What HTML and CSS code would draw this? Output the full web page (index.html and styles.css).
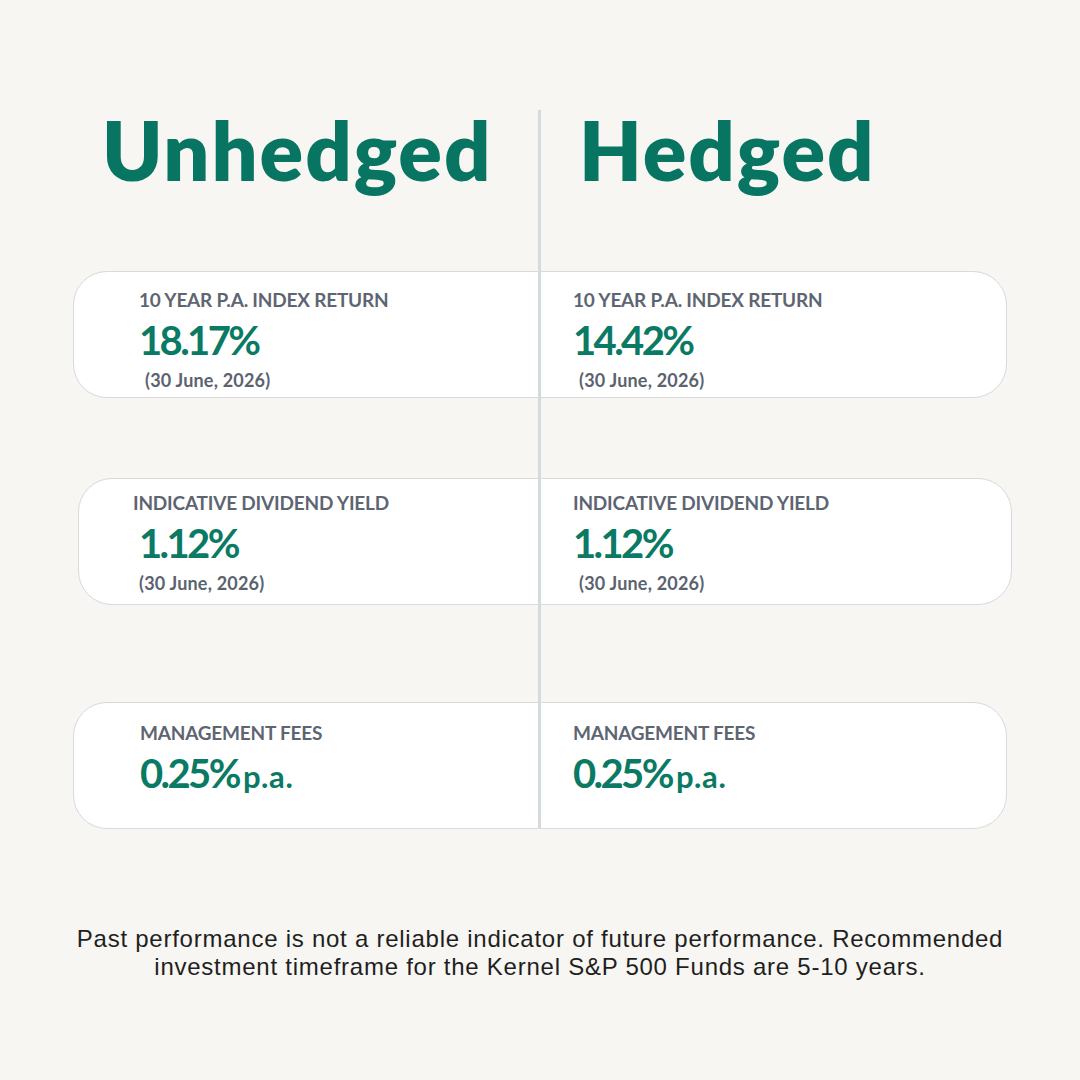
FILE: index.html
```html
<!DOCTYPE html>
<html lang="en">
<head>
<meta charset="utf-8">
<title>Kernel S&amp;P 500 Funds</title>
<link rel="stylesheet" href="styles.css">
</head>
<body>
<main class="page">
  <div class="divider"></div>
  <header class="titles">
    <h1 class="title title-left">Unhedged</h1>
    <h1 class="title title-right">Hedged</h1>
  </header>

  <section class="card card-return">
    <div class="cell cell-left">
      <div class="label">10 YEAR P.A. INDEX RETURN</div>
      <div class="value">18.17%</div>
      <div class="date">(30 June, 2026)</div>
    </div>
    <div class="cell cell-right">
      <div class="label">10 YEAR P.A. INDEX RETURN</div>
      <div class="value">14.42%</div>
      <div class="date">(30 June, 2026)</div>
    </div>
  </section>

  <section class="card card-yield">
    <div class="cell cell-left">
      <div class="label">INDICATIVE DIVIDEND YIELD</div>
      <div class="value">1.12%</div>
      <div class="date">(30 June, 2026)</div>
    </div>
    <div class="cell cell-right">
      <div class="label">INDICATIVE DIVIDEND YIELD</div>
      <div class="value">1.12%</div>
      <div class="date">(30 June, 2026)</div>
    </div>
  </section>

  <section class="card card-fees">
    <div class="cell cell-left">
      <div class="label">MANAGEMENT FEES</div>
      <div class="value">0.25%<span class="unit">p.a.</span></div>
    </div>
    <div class="cell cell-right">
      <div class="label">MANAGEMENT FEES</div>
      <div class="value">0.25%<span class="unit">p.a.</span></div>
    </div>
  </section>

  <p class="note">Past performance is not a reliable indicator of future performance. Recommended<br>investment timeframe for the Kernel S&amp;P 500 Funds are 5-10 years.</p>
</main>
</body>
</html>
```

FILE: styles.css
```css
* { box-sizing: border-box; }

html, body {
  margin: 0;
  padding: 0;
  background: #f7f6f2;
}

.page {
  position: relative;
  width: 1080px;
  height: 1080px;
  padding-top: 109px;
  font-family: "Lato", "Liberation Sans", sans-serif;
  background: #f7f6f2;
}

.divider {
  position: absolute;
  left: 538px;
  top: 110px;
  width: 3px;
  height: 719px;
  background: #d5dadf;
  z-index: 2;
}

.titles {
  display: grid;
  grid-template-columns: 467px 467px;
  margin-left: 73px;
}

.title {
  margin: 0;
  font-size: 81px;
  line-height: 81px;
  font-weight: 800;
  color: #077562;
  letter-spacing: 2px;
}

.title-left { padding-left: 29px; }
.title-right { padding-left: 39px; }

.card {
  display: grid;
  grid-template-columns: 467px 467px;
  width: 934px;
  height: 127px;
  margin-left: 73px;
  background: #ffffff;
  border: 1.5px solid #d6dadd;
  border-radius: 34px;
}

.card-return { margin-top: 81px; }
.card-yield { margin-top: 80px; margin-left: 78px; }
.card-fees { margin-top: 97px; }

.cell { padding-top: 16px; }
.cell-left { padding-left: 65px; }
.cell-right { padding-left: 32px; }

.card-yield .cell { padding-top: 12px; }
.card-yield .cell-left { padding-left: 54px; }
.card-yield .cell-right { padding-left: 27px; }
.card-yield .cell-left .value,
.card-yield .cell-left .date { margin-left: 6px; }

.card-fees .cell { padding-top: 18px; }
.card-fees .cell-left { padding-left: 66px; }

.label {
  font-size: 19px;
  line-height: 24px;
  font-weight: 700;
  color: #5e6572;
  letter-spacing: -0.2px;
  text-shadow: 0 0 18px rgba(255, 255, 255, 0.9);
}

.value {
  margin-top: 7px;
  font-size: 40px;
  line-height: 42px;
  font-weight: 700;
  color: #0a7a64;
  letter-spacing: -2.6px;
}

.unit {
  margin-left: 4px;
  font-size: 31px;
  letter-spacing: 0.6px;
}

.date {
  margin-top: 9px;
  margin-left: 6px;
  font-size: 18px;
  line-height: 20px;
  font-weight: 700;
  color: #5b6270;
  letter-spacing: 0.2px;
}

.note {
  margin: 96px 0 0;
  text-align: center;
  font-family: "Liberation Sans", Arial, sans-serif;
  font-size: 24px;
  line-height: 28px;
  font-weight: 400;
  color: #1f1f1f;
  letter-spacing: 0.75px;
}
```
